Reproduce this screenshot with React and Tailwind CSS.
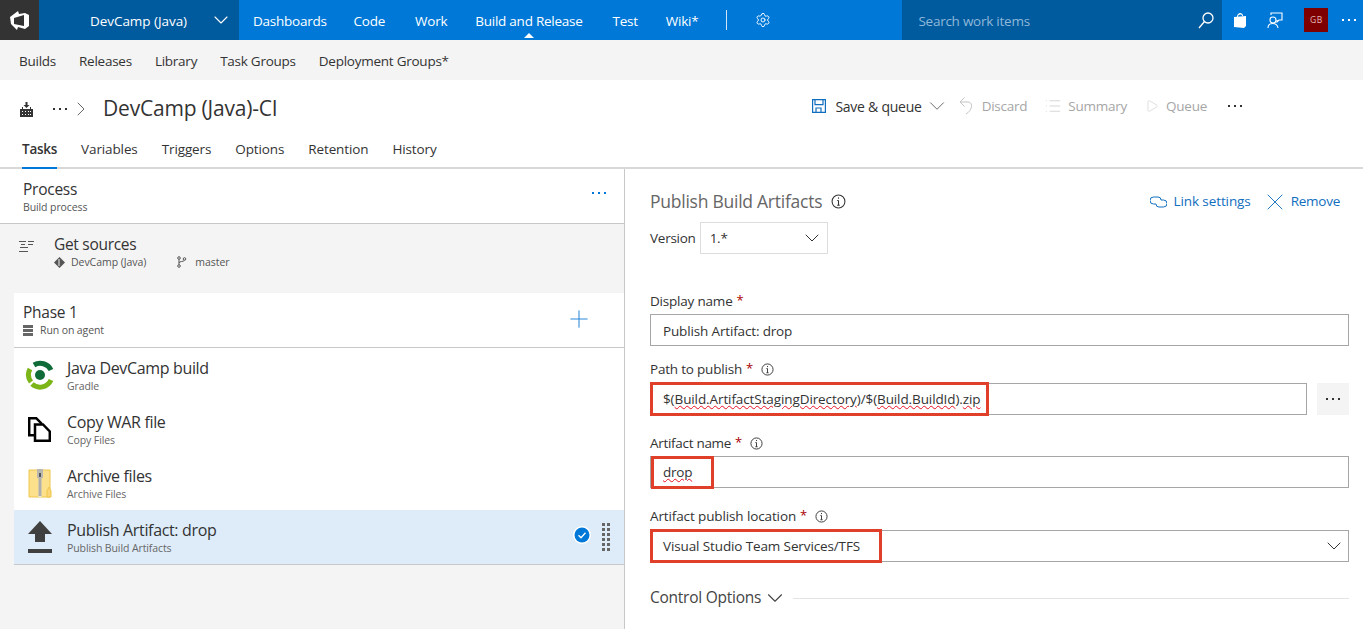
import { ChevronDown, ChevronRight, Settings, X, Plus, List, Play } from 'lucide-react'

function Dots({ className }) {
  return (
    <svg width="16" height="4" viewBox="0 0 16 4" className={className} fill="currentColor">
      <rect x="1" y="1" width="2" height="2" />
      <rect x="7" y="1" width="2" height="2" />
      <rect x="13" y="1" width="2" height="2" />
    </svg>
  )
}

function Info({ size = 14 }) {
  return (
    <svg width={size} height={size} viewBox="0 0 14 14" fill="none" stroke="#333" strokeWidth="1">
      <circle cx="7" cy="7" r="6" />
      <path d="M7 6v4.500M5.800 10.500h2.400M5.800 6H7" />
      <rect x="6.500" y="3.200" width="1" height="1.200" fill="#333" stroke="none" />
    </svg>
  )
}

function Label({ text, info, className = '' }) {
  return (
    <div className={`flex items-center h-[20px] text-[13.5px] text-[#333] ${className}`}>
      <span>{text}</span>
      <span className="text-[#a80000] ml-[4px] text-[13px]">*</span>
      {info && <span className="ml-[8px] flex"><Info size={13} /></span>}
    </div>
  )
}

function RedBox({ className }) {
  return <div className={`absolute border-[3px] border-[#e0402a] ${className}`} />
}

function Squiggle({ children }) {
  return <span className="underline decoration-wavy decoration-[#e81123] decoration-1">{children}</span>
}

function TaskRow({ icon, title, sub, selected, children }) {
  return (
    <div className={`flex items-center pl-[9px] pr-[12px] ${selected ? 'h-[55px] bg-[#deecf9] border-b border-[#c8c8c8]' : 'h-[54px]'}`}>
      <div className="w-[44px] flex justify-center pr-[11px] shrink-0">{icon}</div>
      <div className="flex-1">
        <div className="text-[16px] leading-[20px] tracking-[-0.35px] text-[#333]">{title}</div>
        <div className="text-[10.5px] leading-[14px] tracking-[-0.1px] text-[#666] mt-[1px]">{sub}</div>
      </div>
      {children}
    </div>
  )
}

export default function App() {
  return (
    <div className="w-[1363px] h-[629px] overflow-hidden bg-white text-[#333] font-['Open_Sans',sans-serif] tracking-[-0.25px]">
      {/* top bar */}
      <div className="h-[40px] bg-[#0078d7] flex items-center text-white text-[13.5px]">
        <div className="w-[39px] h-full bg-[#333] flex items-center justify-center">
          <svg width="19" height="19" viewBox="0 0 19 19" fill="white" fillRule="evenodd">
            <path d="M8 0l1 3 6-1 4 2v11l-4 3-7-2-1 3-6-6-1-7zM4 7v6l10 2V4z" />
          </svg>
        </div>
        <div className="w-[200px] h-full bg-[#005a9e] flex items-center pl-[51px]">
          <span className="tracking-[-0.05px] pt-[2px]">DevCamp (Java)</span>
          <ChevronDown size={24} strokeWidth={1.1} className="ml-[22px]" />
        </div>
        <div className="flex items-center ml-[14px] pt-[2px]">
          <span>Dashboards</span>
          <span className="ml-[27px]">Code</span>
          <span className="ml-[30px]">Work</span>
          <span className="relative ml-[28px]">
            Build and Release
            <span className="absolute left-1/2 -ml-[5px] top-[22px] w-0 h-0 border-x-[5px] border-x-transparent border-b-[5px] border-b-white" />
          </span>
          <span className="ml-[30px]">Test</span>
          <span className="ml-[28px]">Wiki*</span>
        </div>
        <div className="w-px h-[20px] bg-[#cfe4f7] ml-[28px]" />
        <Settings size={16} strokeWidth={1.4} className="ml-[28px]" />
        <div className="ml-[131px] w-[320px] h-full bg-[#005a9e] flex items-center pl-[16px] pr-[8px] justify-between text-[#8fb8d9]">
          <span className="pt-[2px]">Search work items</span>
          <svg width="16" height="17" viewBox="0 0 16 17" fill="none" stroke="white" strokeWidth="1.300">
            <circle cx="10" cy="6" r="5" />
            <path d="M6.500 9.500L1 16" />
          </svg>
        </div>
        <svg width="14" height="17" viewBox="0 0 14 17" fill="white" className="ml-[11px]">
          <path d="M1 5l12-1v10l-2 2-10-1zM4 5c0-5 6-5 6-1H9c0-2-4-2-4 1z" />
        </svg>
        <svg width="16" height="17" viewBox="0 0 16 17" fill="none" stroke="white" strokeWidth="1.100" className="ml-[20px]">
          <path d="M4 3V1h11v7h-3l-2 2V8" />
          <circle cx="6" cy="8" r="3" />
          <path d="M1 16c0-6 9-6 10 0" />
        </svg>
        <div className="ml-[21px] w-[24px] h-[24px] bg-[#7f0000] text-[#e3bcbc] text-[8.5px] tracking-[0.5px] flex items-center justify-center">GB</div>
        <Dots className="ml-[13px] shrink-0" />
      </div>

      {/* sub nav */}
      <div className="h-[40px] bg-[#f4f4f4] flex items-center pl-[19px] pt-[2px] gap-[23px] text-[13.5px] text-[#333]">
        <span>Builds</span>
        <span>Releases</span>
        <span>Library</span>
        <span>Task Groups</span>
        <span>Deployment Groups*</span>
      </div>

      {/* title row */}
      <div className="h-[49px] pt-[8px] flex items-center pl-[20px] pr-[120px]">
        <svg width="13" height="15" viewBox="0 0 13 15" fill="#333" className="mt-[1px]">
          <path d="M5.500 0h2v3H9.500L6.500 6 3.500 3h2z" />
          <path d="M0 7h2V5h1v2h7V5h1v2h2v8H0zM2 9v1h1V9zm3 0v1h1V9zm3 0v1h1V9zm2 0v1h1V9zM2 12v1h1v-1zm3 0v1h1v-1zm3 0v1h1v-1zm2 0v1h1v-1z" />
        </svg>
        <Dots className="ml-[19px] text-[#333]" />
        <ChevronRight size={24} strokeWidth={0.9} className="ml-[1px] text-[#555]" />
        <span className="ml-[10px] text-[21px] tracking-[-0.2px] text-[#333]">DevCamp (Java)-CI</span>
        <div className="ml-auto flex items-center text-[13.5px] -mt-[5px]">
          <svg width="14" height="14" viewBox="0 0 14 14" fill="none" stroke="#106ebe" strokeWidth="1.200">
            <path d="M.6.6h12.800v12.800H.6zM3 .6v5h8v-5M4 13.400V9h5v4.400" />
          </svg>
          <span className="ml-[9px] text-[14px]">Save &amp; queue</span>
          <ChevronDown size={26} strokeWidth={0.8} className="ml-[2px] text-[#555]" />
          <svg width="14" height="18" viewBox="0 0 14 18" fill="none" stroke="#c4c4c4" className="ml-[9px]">
            <path d="M5.500.5L1 5l4.500 4.500M1 5h8c5 0 5 8-2 12" />
          </svg>
          <span className="ml-[9px] text-[#a6a6a6]">Discard</span>
          <List size={18} strokeWidth={1} className="ml-[17px] text-[#c8c8c8]" />
          <span className="ml-[6px] text-[#a6a6a6]">Summary</span>
          <Play size={14} strokeWidth={1} className="ml-[18px] text-[#c8c8c8]" />
          <span className="ml-[7px] text-[#a6a6a6]">Queue</span>
          <Dots className="ml-[20px] text-[#333]" />
        </div>
      </div>

      {/* tabs */}
      <div className="h-[40px] border-b-2 border-[#d8d8d8] flex pl-[22px] gap-[24px] text-[13.5px] tracking-[-0.12px] text-[#333]">
        <div className="relative h-[40px] flex items-center font-semibold tracking-[-0.25px]">
          Tasks
          <div className="absolute left-0 right-0 bottom-0 h-[2px] bg-[#0078d7]" />
        </div>
        <div className="h-[40px] flex items-center">Variables</div>
        <div className="h-[40px] flex items-center">Triggers</div>
        <div className="h-[40px] flex items-center">Options</div>
        <div className="h-[40px] flex items-center">Retention</div>
        <div className="h-[40px] flex items-center">History</div>
      </div>

      <div className="flex h-[460px]">
        {/* left panel */}
        <div className="w-[625px] shrink-0 border-r border-[#c8c8c8] bg-[#f4f4f4]">
          <div className="h-[55px] bg-white border-b border-[#c8c8c8] flex items-center pl-[23px] pr-[17px]">
            <div className="flex-1">
              <div className="text-[15.5px] leading-[20px]">Process</div>
              <div className="text-[10.5px] leading-[14px] tracking-[-0.1px] text-[#555] mt-[1px]">Build process</div>
            </div>
            <Dots className="text-[#0078d7] -mt-[6px]" />
          </div>
          <div className="h-[69px] flex pl-[19px] pt-[10px]">
            <svg width="16" height="13" viewBox="0 0 16 13" fill="#555" className="mt-[6px]">
              <rect x="0" y="1" width="7" height="1" />
              <rect x="9" y="1" width="6" height="1" />
              <rect x="2" y="4" width="4" height="1" />
              <rect x="9" y="4" width="5" height="1" />
              <rect x="1" y="7" width="8" height="1" />
              <rect x="0" y="11" width="9" height="1" />
            </svg>
            <div className="ml-[19px]">
              <div className="text-[15.5px] leading-[20px] tracking-[-0.3px]">Get sources</div>
              <div className="flex items-center text-[10.5px] leading-[14px] tracking-[-0.05px] text-[#555] mt-[1px]">
                <svg width="11" height="11" viewBox="0 0 11 11" fill="#555">
                  <path d="M5.500 0l5.500 5.500-5.500 5.500L0 5.500z" />
                  <rect x="4.500" y="2" width="1" height="7" fill="#f4f4f4" />
                </svg>
                <span className="ml-[6px]">DevCamp (Java)</span>
                <svg width="10" height="12" viewBox="0 0 10 12" fill="none" stroke="#555" className="ml-[31px]">
                  <circle cx="2" cy="2" r="1.300" />
                  <circle cx="2" cy="10" r="1.300" />
                  <circle cx="7.500" cy="3" r="1.300" />
                  <path d="M2 3.300v5.400M2 7c0-2 5-1 5.500-2.800" />
                </svg>
                <span className="ml-[8px]">master</span>
              </div>
            </div>
          </div>

          <div className="ml-[14px] bg-white">
            <div className="h-[55px] border-b border-[#c8c8c8] flex items-center pl-[9px] pr-[31px]">
              <div className="flex-1 -mt-[1px]">
                <div className="text-[15.5px] leading-[20px]">Phase 1</div>
                <div className="flex items-center text-[10.5px] leading-[14px] tracking-[-0.1px] text-[#555] mt-[1px]">
                  <svg width="10" height="11" viewBox="0 0 10 11" fill="#666">
                    <path d="M0 0h10v3H0zM0 4h10v3H0zM0 8h10v3H0z" />
                  </svg>
                  <span className="ml-[7px]">Run on agent</span>
                </div>
              </div>
              <Plus size={28} strokeWidth={0.9} className="text-[#2b88d8] -mt-[2px]" />
            </div>
            <TaskRow
              title="Java DevCamp build"
              sub="Gradle"
              icon={
                <svg width="30" height="30" viewBox="0 0 30 30" fill="none">
                  <path d="M6 22A12 12 0 0 1 5 9" stroke="#7cb518" strokeWidth="5" />
                  <path d="M9 5a12 12 0 0 1 17 5" stroke="#0f6b37" strokeWidth="5" />
                  <path d="M26 20a12 12 0 0 1-19 4" stroke="#7cb518" strokeWidth="5" />
                  <circle cx="15" cy="15" r="5" fill="#0f6b37" />
                </svg>
              }
            />
            <TaskRow
              title="Copy WAR file"
              sub="Copy Files"
              icon={
                <svg width="23" height="25" viewBox="0 0 23 25" fill="white" stroke="black" strokeWidth="2.500">
                  <path d="M1.200 1.200h7l5 5v12h-12z" />
                  <path d="M7 7.500h8l6.800 7v9.300H7z" />
                </svg>
              }
            />
            <TaskRow
              title="Archive files"
              sub="Archive Files"
              icon={
                <svg width="24" height="29" viewBox="0 0 24 29">
                  <path d="M1 1h21v27H1z" fill="#fde08c" stroke="#eec64a" />
                  <path d="M19 22l2-4 2 4v6h-4z" fill="#fbd67a" stroke="#eec64a" />
                  <rect x="9" y="0" width="6" height="9" fill="#b8b8b0" />
                  <rect x="11" y="4" width="2" height="4" fill="#555" />
                  <path d="M10.500 9h3v19h-3z" fill="#e8e8e0" />
                  <path d="M10.500 10h3M10.500 12h3M10.500 14h3M10.500 16h3M10.500 18h3M10.500 20h3M10.500 22h3M10.500 24h3M10.500 26h3" stroke="#777" />
                </svg>
              }
            />
            <TaskRow
              selected
              title="Publish Artifact: drop"
              sub="Publish Build Artifacts"
              icon={
                <svg width="24" height="32" viewBox="0 0 24 32" fill="#404040">
                  <path d="M12 0l12 13h-7v8H7v-8H0z" />
                  <rect y="28" width="24" height="4" />
                </svg>
              }
            >
              <svg width="18" height="18" viewBox="0 0 18 18" className="mr-[11px] -mt-[4px]">
                <circle cx="9" cy="9" r="9" fill="white" />
                <circle cx="9" cy="9" r="7.500" fill="#0078d7" />
                <path d="M5.500 9.200l2.500 2.500 4.500-5" fill="none" stroke="white" strokeWidth="1.300" />
              </svg>
              <svg width="8" height="28" viewBox="0 0 8 28" fill="#666" className="mr-[2px]">
                <path d="M0 0h3v3H0zM5 0h3v3H5zM0 5h3v3H0zM5 5h3v3H5zM0 10h3v3H0zM5 10h3v3H5zM0 15h3v3H0zM5 15h3v3H5zM0 20h3v3H0zM5 20h3v3H5zM0 25h3v3H0zM5 25h3v3H5z" />
              </svg>
            </TaskRow>
          </div>
        </div>

        {/* right panel */}
        <div className="flex-1 pl-[25px] pr-[14px]">
          <div className="h-[52px] flex items-center pt-[13px]">
            <span className="text-[17.5px] text-[#666]">Publish Build Artifacts</span>
            <span className="ml-[9px] flex"><Info size={15} /></span>
            <div className="ml-auto flex items-center text-[13.5px] text-[#106ebe] pr-[9px]">
              <svg width="17" height="12" viewBox="0 0 17 12" fill="none" stroke="#106ebe">
                <path d="M6 8H3.500a3 3 0 0 1 0-7H8a3 3 0 0 1 3 3" />
                <path d="M11 4h2.500a3.500 3.500 0 0 1 0 7H9a3 3 0 0 1-3-3" />
              </svg>
              <span className="ml-[7px] tracking-[-0.1px]">Link settings</span>
              <X size={28} strokeWidth={0.8} className="ml-[10px]" />
              <span className="ml-[2px]">Remove</span>
            </div>
          </div>
          <div className="flex items-center h-[32px] mt-[1px] text-[13.5px]">
            <span>Version</span>
            <div className="ml-[4px] w-[128px] h-[32px] border border-[#ddd] flex items-center justify-between pl-[9px] pr-[3px]">
              <span>1.*</span>
              <ChevronDown size={24} strokeWidth={1} />
            </div>
          </div>

          <Label text="Display name" className="mt-[37px] tracking-[-0.2px]" />
          <div className="mt-[3px] h-[32px] border border-[#a6a6a6] flex items-center pl-[12px] pt-[2px] text-[13.5px] tracking-[-0.15px]">Publish Artifact: drop</div>

          <Label text="Path to publish" info className="mt-[13px] tracking-[-0.2px]" />
          <div className="flex mt-[4px] h-[32px] relative">
            <div className="flex-1 border border-[#a6a6a6] flex items-center pl-[12px] text-[13.5px] tracking-[-0.1px]">
              <span>$(<Squiggle>Build.ArtifactStagingDirectory</Squiggle>)/$(<Squiggle>Build.BuildId</Squiggle>).<Squiggle>zip</Squiggle></span>
            </div>
            <div className="ml-[10px] w-[32px] bg-[#f4f4f4] flex items-center justify-center"><Dots /></div>
            <RedBox className="left-0 -top-[1px] w-[339px] h-[34px]" />
          </div>

          <Label text="Artifact name" info className="mt-[18px] tracking-[-0.3px]" />
          <div className="mt-[3px] h-[32px] relative border border-[#a6a6a6] flex items-center pl-[12px] text-[13.5px]">
            <Squiggle>drop</Squiggle>
            <RedBox className="left-0 -top-[1px] w-[63px] h-[33px]" />
          </div>

          <Label text="Artifact publish location" info className="mt-[18px] tracking-[-0.12px]" />
          <div className="mt-[4px] h-[32px] relative border border-[#a6a6a6] flex items-center justify-between pl-[12px] pr-[2px] text-[13.5px] tracking-[-0.12px]">
            <span>Visual Studio Team Services/TFS</span>
            <ChevronDown size={24} strokeWidth={1} />
            <RedBox className="-left-px -top-[2px] w-[232px] h-[34px]" />
          </div>

          <div className="flex items-center mt-[23px] text-[15.5px] text-[#444]">
            <span>Control Options</span>
            <ChevronDown size={26} strokeWidth={1} className="ml-px" />
            <div className="flex-1 h-px bg-[#e4e4e4] ml-[5px]" />
          </div>
        </div>
      </div>
    </div>
  )
}
